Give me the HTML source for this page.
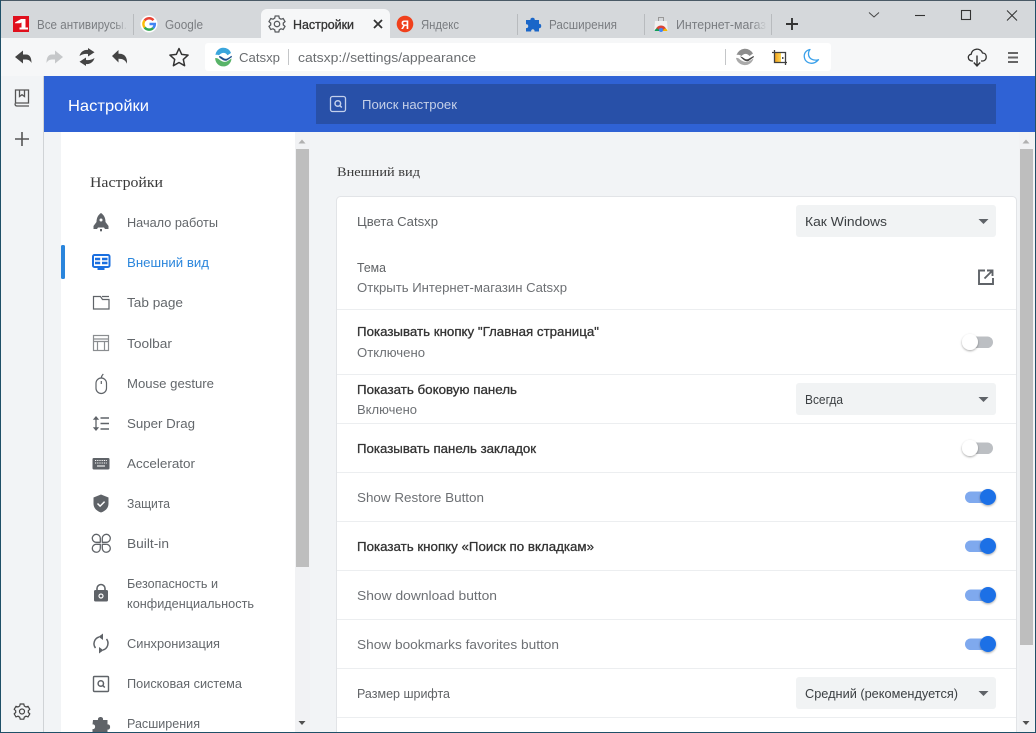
<!DOCTYPE html>
<html><head><meta charset="utf-8"><title>Настройки</title>
<style>
html,body{margin:0;padding:0;background:#f2f4f6;overflow:hidden}
svg{display:block}
text{font-family:"Liberation Sans","DejaVu Sans",sans-serif;font-size:13px;fill:#606366}
.s{font-family:"Liberation Serif","DejaVu Serif",serif;fill:#3a3a3a}
.t{fill:#7a7d81}
.n{fill:#63676b}
.b{fill:#333;stroke:#333;stroke-width:.3px}
.i{fill:#5f6368}
</style></head><body>
<svg width="1036" height="733" viewBox="0 0 1036 733" xmlns="http://www.w3.org/2000/svg">
<defs>
<linearGradient id="fade" x1="0" x2="1" y1="0" y2="0"><stop offset="0" stop-color="#d5d8db" stop-opacity="0"/><stop offset="1" stop-color="#d5d8db"/></linearGradient>
<linearGradient id="crop" x1="0" x2="1" y1="0" y2="0"><stop offset="0" stop-color="#f2a21c"/><stop offset="1" stop-color="#fbd65a"/></linearGradient>
<filter id="sh" x="-40%" y="-40%" width="180%" height="180%"><feDropShadow dx="0" dy="1" stdDeviation="1" flood-color="#000" flood-opacity=".35"/></filter>
</defs>
<rect width="1036" height="733" fill="#f2f4f6"/>
<!-- tab strip -->
<rect width="1036" height="38" fill="#d5d8db"/>
<rect width="1036" height="1" fill="#4a5a66"/>
<path d="M261 38V15a6 6 0 0 1 6-6h117a6 6 0 0 1 6 6v23z" fill="#f6f7f8"/>
<!-- tab 1 -->
<rect x="13" y="16" width="16" height="16" fill="#e0101d"/>
<path d="M15 22.500l6-3.500h4.500v8.500h2.500v2H19.500v-2h2v-5l-1.500 .8h-5z" fill="#fff"/>
<text class="t" x="37" y="29" textLength="90" lengthAdjust="spacingAndGlyphs">Все антивирусы.</text>
<rect x="115" y="14" width="13" height="20" fill="url(#fade)"/>
<rect x="133" y="14" width="1" height="21" fill="#b8bbbe"/>
<!-- google -->
<circle cx="149" cy="24" r="8.500" fill="#fff"/>
<g fill="none" stroke-width="2.500">
<path d="M153.500 20.200A5.800 5.800 0 0 0 144.600 20.500" stroke="#ea4335"/>
<path d="M144.600 20.500A5.800 5.800 0 0 0 144.600 27.500" stroke="#fbbc05"/>
<path d="M144.600 27.500A5.800 5.800 0 0 0 153.200 28" stroke="#34a853"/>
<path d="M153.200 28A5.800 5.800 0 0 0 154.800 24H149.500" stroke="#4285f4"/>
</g>
<text class="t" x="165" y="29" textLength="38" lengthAdjust="spacingAndGlyphs">Google</text>
<!-- gear tab -->
<g transform="translate(277,24)" fill="none" stroke="#5a5d60" stroke-width="1.300">
<path d="M-1.800-8h3.600l.5 2.200 1.700 1 2.200-.7 1.800 3.100-1.700 1.500v1.800l1.700 1.500-1.800 3.100-2.200-.7-1.700 1-.5 2.200h-3.600l-.5-2.200-1.700-1-2.200.7-1.800-3.100 1.700-1.500v-1.800l-1.700-1.500 1.800-3.100 2.200.7 1.700-1z"/>
<circle r="2.700"/>
</g>
<text class="b" x="293" y="29" textLength="61" lengthAdjust="spacingAndGlyphs">Настройки</text>
<path d="M374 20l8 8M382 20l-8 8" stroke="#333" stroke-width="1.800"/>
<!-- yandex -->
<circle cx="405" cy="24" r="8.300" fill="#f0401c"/>
<text x="401" y="29" textLength="8" lengthAdjust="spacingAndGlyphs" style="fill:#fff;font-size:12px;font-weight:bold">Я</text>
<text class="t" x="421" y="29" textLength="38" lengthAdjust="spacingAndGlyphs">Яндекс</text>
<rect x="517" y="14" width="1" height="21" fill="#b8bbbe"/>
<!-- ext -->
<path d="M526 20h4.500c-.8-3 5-3 4.200 0h4.300v4c3-.8 3 5 0 4.200v3.300h-4.500c.5-3-3.800-3-3.300 0h-5.200v-3.500c3 .8 3-4.500 0-3.700z" fill="#1a66c8"/>
<text class="t" x="549" y="29" textLength="68" lengthAdjust="spacingAndGlyphs">Расширения</text>
<rect x="644" y="14" width="1" height="21" fill="#b8bbbe"/>
<!-- store -->
<path d="M655 21h12l.8 10h-13.600z" fill="#f1f1f1"/>
<path d="M658.500 21v-3.500h5V21" fill="none" stroke="#999" stroke-width="1"/>
<path d="M655.500 31a5.500 5.500 0 0 1 11 0z" fill="#db4437"/>
<path d="M654.500 31a3.500 3.500 0 0 1 3.500-2.500l1.500 2.500z" fill="#0f9d58"/>
<path d="M663 31a3 3 0 0 1 2-2.500 3 3 0 0 1 2.500 2.500z" fill="#f4b400"/>
<circle cx="661" cy="30" r="2" fill="#4285f4"/>
<text class="t" x="676" y="29" textLength="90" lengthAdjust="spacingAndGlyphs">Интернет-магаз</text>
<rect x="752" y="14" width="15" height="20" fill="url(#fade)"/>
<rect x="771" y="14" width="1" height="21" fill="#b8bbbe"/>
<path d="M792 18v12M786 24h12" stroke="#333" stroke-width="1.900"/>
<!-- window controls -->
<path d="M869 12.500l5 4.500 5-4.500" fill="none" stroke="#444" stroke-width="1"/>
<path d="M915 15.500h10" stroke="#333" stroke-width="1.100"/>
<rect x="961.500" y="10.500" width="9" height="9" fill="none" stroke="#333" stroke-width="1.100"/>
<path d="M1007 10.500l10 10M1017 10.500l-10 10" stroke="#333" stroke-width="1"/>
<!-- toolbar -->
<rect y="38" width="1036" height="38" fill="#f6f7f8"/>
<rect x="205" y="43" width="626" height="28" rx="3" fill="#fff"/>
<path d="M15 57l8-6.500v4h3c4 0 5.500 3.500 5.500 8.500-1.500-3-3.500-3.500-6.500-3.500h-2v4z" fill="#444"/>
<path d="M63 57l-8-6.500v4h-3c-4 0-5.500 3.500-5.500 8.500 1.500-3 3.500-3.500 6.500-3.500h2v4z" fill="#c6c8ca"/>
<g fill="#444">
<path d="M79.500 56c1-4 4.500-6.500 8.500-6V48l6.500 4.200-6.500 4.300v-2.500c-3-.3-5.500 0-8.500 2z"/>
<path d="M94.500 58c-1 4-4.500 6.500-8.500 6v2l-6.500-4.200 6.500-4.300v2.500c3 .3 5.500 0 8.500-2z"/>
</g>
<path d="M112 56l6.500-6v3.800c6-.5 9 3.500 8.500 10-1.500-3.500-4-5-8.500-5V62.500z" fill="#444"/>
<path d="M179 48.500l2.700 5.900 6.400.7-4.800 4.300 1.300 6.300-5.600-3.200-5.600 3.200 1.300-6.300-4.800-4.300 6.400-.7z" fill="none" stroke="#333" stroke-width="1.500" stroke-linejoin="round"/>
<!-- logo -->
<path d="M215.500 55a8 8 0 0 1 15.500-2l-3.500 2.200c-2.500-3.500-6-2.500-8.500 0-1.200-.5-2.400-.5-3.500-.2z" fill="#3aa5dc"/>
<path d="M219 56c2.500 0 4 2.500 6.500 2.800 2 .2 3.500-1.500 6-3l.5 1.200-5 3.500c-3 1-5-1-7.500-2.700z" fill="#1f4f8c"/>
<path d="M215.200 58c2 0 3 .5 4 1.500 3 2.500 6 3 8.500 1.500l3.800-2.500a8 8 0 0 1-16.300-.5z" fill="#58b368"/>
<text x="239" y="62" textLength="41" lengthAdjust="spacingAndGlyphs" style="fill:#6a6d70">Catsxp</text>
<rect x="288" y="49" width="1" height="16" fill="#c4c6c8"/>
<text x="298" y="62" textLength="178" lengthAdjust="spacingAndGlyphs" style="fill:#6a6d70">catsxp://settings/appearance</text>
<rect x="725" y="49" width="1" height="16" fill="#c4c6c8"/>
<!-- address right icons -->
<path d="M736.500 55a9 9 0 0 1 16.500-1.500l-3.500 2.500c-3-3.500-6-2-8 0-1.500-1-3-1.500-5-1z" fill="#8d8d8d"/>
<path d="M740 56.500c2.500 0 3.500 2 6 2.800 2 .5 4-1.500 7.500-3.300l.5 1-5.500 4c-3 1-5-1-8.500-4.500z" fill="#444"/>
<path d="M736 58c2-.3 3 .5 4 1.500 3 2.500 6.500 3 9.500 1.500l4-2.500a9 9 0 0 1-17.500-.5z" fill="#aaa"/>
<rect x="775" y="53" width="6" height="9" fill="url(#crop)"/>
<rect x="782" y="57" width="1.500" height="2" fill="#555"/>
<path d="M774.500 50v12.500h12.500M772 52.500h13.500V65" fill="none" stroke="#3f3f3f" stroke-width="1.300"/>
<path d="M810 49.500c-4.500 1-6.500 4.500-5.500 8.500 1 4.500 6.500 6.500 10.500 4.500 1.500-.8 2.500-1.600 3.500-2.800-5.500 1.500-9.500-1-10-5.200-.2-2 .3-3.500 1.500-5z" fill="none" stroke="#3aa0ea" stroke-width="1.300" stroke-linejoin="round"/>
<!-- cloud download -->
<path d="M973 61h-1c-4.500-.5-5-6-.8-6.800 1-6.500 9.800-6.500 11.300-1.200 4.800-.2 5 7.500.5 8H981" fill="none" stroke="#333" stroke-width="1.300"/>
<path d="M977 55.500v10M973.800 62.500l3.200 3.500 3.200-3.500" fill="none" stroke="#333" stroke-width="1.400"/>
<path d="M1008 52h10v2h-10zM1008 56.500h10v2h-10zM1008 61h10v2h-10z" fill="#666"/>
<!-- left rail -->
<rect y="76" width="43" height="657" fill="#f2f4f6"/>
<rect x="43" y="76" width="1" height="657" fill="#d0d3d6"/>
<path d="M15.500 90h13v13h-13zM15 103.500c0 2 1 2.500 2 2.500h12" fill="none" stroke="#555" stroke-width="1.300"/>
<path d="M19.500 90v6.500l2.500-1.800 2.500 1.800V90" fill="none" stroke="#555" stroke-width="1.300"/>
<path d="M22 132v14M15 139h14" stroke="#555" stroke-width="1.600"/>
<g transform="translate(22,711.500)" fill="none" stroke="#444" stroke-width="1.200">
<path d="M-1.800-7.500h3.600l.5 2 1.700 1 2-.7 1.800 3-1.500 1.400v1.800l1.500 1.400-1.800 3-2-.7-1.700 1-.5 2h-3.600l-.5-2-1.700-1-2 .7-1.800-3 1.500-1.400v-1.800l-1.500-1.400 1.800-3 2 .7 1.700-1z"/>
<circle r="2.500"/>
</g>
<!-- header -->
<rect x="44" y="76" width="992" height="56" fill="#2f62d5"/>
<rect x="316" y="84" width="680" height="40" fill="#2850a8"/>
<text x="68" y="111" textLength="81" lengthAdjust="spacingAndGlyphs" style="fill:#fff;font-size:16px">Настройки</text>
<rect x="330.500" y="96.500" width="15" height="15" rx="2" fill="none" stroke="#c3d0ec" stroke-width="1.300"/>
<circle cx="337.800" cy="103.500" r="2.800" fill="none" stroke="#c3d0ec" stroke-width="1.500"/>
<path d="M340 105.700l1.800 1.800" stroke="#c3d0ec" stroke-width="1.500"/>
<text x="362" y="109" textLength="95" lengthAdjust="spacingAndGlyphs" style="fill:#c5d0e8">Поиск настроек</text>
<!-- nav -->
<rect x="61" y="132" width="234" height="601" fill="#fff"/>
<rect x="61" y="245" width="4" height="34" rx="1.500" fill="#2a85dc"/>
<text class="s" x="90" y="187" textLength="73" lengthAdjust="spacingAndGlyphs" style="font-size:15px">Настройки</text>
<text class="n" x="127" y="227" textLength="91" lengthAdjust="spacingAndGlyphs">Начало работы</text>
<text x="127" y="267" textLength="82" lengthAdjust="spacingAndGlyphs" style="fill:#2b86dc">Внешний вид</text>
<text class="n" x="127" y="307" textLength="56" lengthAdjust="spacingAndGlyphs">Tab page</text>
<text class="n" x="127" y="348" textLength="45" lengthAdjust="spacingAndGlyphs">Toolbar</text>
<text class="n" x="127" y="388" textLength="87" lengthAdjust="spacingAndGlyphs">Mouse gesture</text>
<text class="n" x="127" y="428" textLength="68" lengthAdjust="spacingAndGlyphs">Super Drag</text>
<text class="n" x="127" y="468" textLength="68" lengthAdjust="spacingAndGlyphs">Accelerator</text>
<text class="n" x="127" y="508" textLength="43" lengthAdjust="spacingAndGlyphs">Защита</text>
<text class="n" x="127" y="548" textLength="42" lengthAdjust="spacingAndGlyphs">Built-in</text>
<text class="n" x="127" y="588" textLength="91" lengthAdjust="spacingAndGlyphs">Безопасность и</text>
<text class="n" x="127" y="608" textLength="127" lengthAdjust="spacingAndGlyphs">конфиденциальность</text>
<text class="n" x="127" y="648" textLength="93" lengthAdjust="spacingAndGlyphs">Синхронизация</text>
<text class="n" x="127" y="688" textLength="115" lengthAdjust="spacingAndGlyphs">Поисковая система</text>
<text class="n" x="127" y="728" textLength="73" lengthAdjust="spacingAndGlyphs">Расширения</text>
<!-- nav icons -->
<path d="M101 213c3 2 4.500 5 4.500 9l3 4v3h-3.500l-1-1.500h-6l-1 1.500H93.500v-3l3-4c0-4 1.500-7 4.500-9z" class="i"/>
<circle cx="101" cy="220" r="1.500" fill="#fff"/>
<rect x="100" y="229" width="2" height="2.300" class="i"/>
<rect x="93" y="255" width="16.500" height="12" rx="1.500" fill="none" stroke="#1a6fe0" stroke-width="2"/>
<path d="M95 257.800h5.200v2.500H95zM102 257.800h5.500v2.500H102zM95 261.800h5.200v2.500H95zM102 261.800h5.500v2.500H102zM97.500 268h7v2h-7z" fill="#1a6fe0"/>
<path d="M93.500 296.500h7l2 3h6.500v9.500h-15.500zM102 296.500h7" fill="none" stroke="#5f6368" stroke-width="1.200"/>
<rect x="93.500" y="335.500" width="15" height="15" fill="none" stroke="#8a8d90" stroke-width="1.200"/>
<path d="M93.500 339h15M93.500 341.500h15M97.500 341.500v9M104.500 341.500v9" stroke="#8a8d90" stroke-width="1.200"/>
<rect x="96" y="378" width="10.500" height="15.500" rx="5.200" fill="none" stroke="#5f6368" stroke-width="1.200"/>
<path d="M101.300 378c0-2 1-3 2-4M101.300 381v3" fill="none" stroke="#5f6368" stroke-width="1.200"/>
<path d="M96 417v13" stroke="#5f6368" stroke-width="1.300"/>
<path d="M93.500 419.500l2.500-3 2.500 3zM93.500 427.500l2.500 3 2.500-3z" stroke="#5f6368" fill="#5f6368" stroke-width=".6"/>
<path d="M100.500 418h8.500M100.500 423.500h8.500M100.500 429h8.500" stroke="#5f6368" stroke-width="1.500"/>
<rect x="92.500" y="458" width="17" height="11.500" rx="1.200" class="i"/>
<path d="M95 460.500h12M95 463h12" stroke="#fff" stroke-width="1.100" stroke-dasharray="1 .8"/>
<path d="M97 466h8" stroke="#fff" stroke-width="1.100"/>
<path d="M101 494.500l7.500 3v6c0 4.500-3 7.500-7.500 9-4.500-1.500-7.500-4.500-7.500-9v-6z" class="i"/>
<path d="M97.500 503.500l2.600 2.600 4.500-4.500" fill="none" stroke="#fff" stroke-width="1.500"/>
<g fill="none" stroke="#5f6368" stroke-width="1.300" stroke-linejoin="round">
<path d="M100.300 542.300H96.700a4 4 0 1 1 3.600-4z"/>
<path d="M102.300 542.300h3.600a4 4 0 1 0-3.600-4z"/>
<path d="M100.300 544.300H96.700a4 4 0 1 0 3.600 4z"/>
<path d="M102.300 544.300h3.600a4 4 0 1 1-3.600 4z"/>
</g>
<rect x="94" y="590" width="14" height="11.500" rx="1.500" class="i"/>
<path d="M97 590v-1.500a4 4 0 0 1 8 0V590" fill="none" stroke="#5f6368" stroke-width="1.600"/>
<circle cx="101" cy="596" r="2" fill="none" stroke="#fff" stroke-width="1.200"/>
<path d="M95.500 648a7 7 0 0 1 3.500-11M106.500 639a7 7 0 0 1-3.500 11" fill="none" stroke="#5f6368" stroke-width="1.500"/>
<path d="M98.500 636.800l4.500-3.300v6.500zM103.500 650.200l-4.500 3.300v-6.500z" class="i"/>
<rect x="93.500" y="676.500" width="15" height="15" rx="1" fill="none" stroke="#5f6368" stroke-width="1.400"/>
<circle cx="100.800" cy="683.500" r="2.700" fill="none" stroke="#5f6368" stroke-width="1.500"/>
<path d="M103 685.700l1.800 1.800" stroke="#5f6368" stroke-width="1.500"/>
<path d="M93 720h5c-.8-4 6-4 5 0h4.500v4.500c3.500-.8 3.500 6 0 5v3.500h-15v-4c3.500 1 3.500-5.500 0-4.500z" class="i"/>
<!-- nav scrollbar -->
<rect x="295" y="132" width="15" height="601" fill="#f1f2f4"/>
<rect x="296" y="149" width="13" height="418" fill="#bebebe"/>
<path d="M298.500 143.500l3.500-4 3.500 4z" fill="#b0b0b0"/>
<path d="M298.500 721l3.500 4 3.500-4z" fill="#505050"/>
<!-- main scrollbar -->
<rect x="1019" y="132" width="15" height="601" fill="#f1f2f4"/>
<rect x="1020" y="149" width="13" height="496" fill="#bebebe"/>
<path d="M1022.500 143.500l3.500-4 3.500 4z" fill="#b0b0b0"/>
<path d="M1022.500 721l3.500 4 3.500-4z" fill="#505050"/>
<!-- main -->
<text class="s" x="337" y="176" textLength="83" lengthAdjust="spacingAndGlyphs">Внешний вид</text>
<rect x="336.500" y="196.500" width="680" height="545" rx="4" fill="#fff" stroke="#e2e4e7" stroke-width="1"/>
<g fill="#eceef0">
<rect x="337" y="309" width="679" height="1"/><rect x="337" y="374" width="679" height="1"/><rect x="337" y="423" width="679" height="1"/><rect x="337" y="472" width="679" height="1"/><rect x="337" y="521" width="679" height="1"/><rect x="337" y="570" width="679" height="1"/><rect x="337" y="619" width="679" height="1"/><rect x="337" y="668" width="679" height="1"/><rect x="337" y="717" width="679" height="1"/>
</g>
<text x="357" y="226" textLength="81" lengthAdjust="spacingAndGlyphs">Цвета Catsxp</text>
<text x="357" y="272" textLength="29" lengthAdjust="spacingAndGlyphs">Тема</text>
<text x="357" y="292" textLength="210" lengthAdjust="spacingAndGlyphs" style="fill:#6d7074">Открыть Интернет-магазин Catsxp</text>
<text class="b" x="357" y="336" textLength="242" lengthAdjust="spacingAndGlyphs">Показывать кнопку "Главная страница"</text>
<text x="357" y="357" textLength="68" lengthAdjust="spacingAndGlyphs" style="fill:#6d7074">Отключено</text>
<text class="b" x="357" y="394" textLength="160" lengthAdjust="spacingAndGlyphs">Показать боковую панель</text>
<text x="357" y="414" textLength="60" lengthAdjust="spacingAndGlyphs" style="fill:#6d7074">Включено</text>
<text class="b" x="357" y="453" textLength="179" lengthAdjust="spacingAndGlyphs">Показывать панель закладок</text>
<text x="357" y="502" textLength="127" lengthAdjust="spacingAndGlyphs" style="fill:#6d7074">Show Restore Button</text>
<text class="b" x="357" y="551" textLength="237" lengthAdjust="spacingAndGlyphs">Показать кнопку «Поиск по вкладкам»</text>
<text x="357" y="600" textLength="140" lengthAdjust="spacingAndGlyphs" style="fill:#6d7074">Show download button</text>
<text x="357" y="649" textLength="202" lengthAdjust="spacingAndGlyphs" style="fill:#6d7074">Show bookmarks favorites button</text>
<text x="357" y="698" textLength="93" lengthAdjust="spacingAndGlyphs">Размер шрифта</text>
<!-- selects -->
<g fill="#f1f3f4">
<rect x="796" y="205" width="200" height="32" rx="3"/><rect x="796" y="383" width="200" height="32" rx="3"/><rect x="796" y="677" width="200" height="32" rx="3"/>
</g>
<text x="805" y="226" textLength="82" lengthAdjust="spacingAndGlyphs" style="fill:#3c4043">Как Windows</text>
<text x="805" y="404" textLength="38" lengthAdjust="spacingAndGlyphs" style="fill:#3c4043">Всегда</text>
<text x="805" y="698" textLength="153" lengthAdjust="spacingAndGlyphs" style="fill:#3c4043">Средний (рекомендуется)</text>
<g fill="#5f6368"><path d="M978.500 219h10l-5 5zM978.500 397h10l-5 5zM978.500 691h10l-5 5z"/></g>
<!-- external link -->
<path d="M985 270.500h-6v13.500h14V278" fill="none" stroke="#5f6368" stroke-width="1.900"/>
<path d="M984.500 278.500l7.500-7.500M987 270.500h5.500V276" fill="none" stroke="#5f6368" stroke-width="1.900"/>
<!-- toggles off -->
<rect x="965" y="336.500" width="28" height="11.500" rx="5.700" fill="#bcbfc3"/>
<circle cx="970" cy="342" r="8" fill="#fff" filter="url(#sh)"/>
<rect x="965" y="442.500" width="28" height="11.500" rx="5.700" fill="#bcbfc3"/>
<circle cx="970" cy="448" r="8" fill="#fff" filter="url(#sh)"/>
<!-- toggles on -->
<rect x="965" y="491.500" width="26" height="11.500" rx="5.700" fill="#7fa9ee"/><circle cx="988" cy="497" r="8" fill="#1a6fe6" filter="url(#sh)"/>
<rect x="965" y="540.500" width="26" height="11.500" rx="5.700" fill="#7fa9ee"/><circle cx="988" cy="546" r="8" fill="#1a6fe6" filter="url(#sh)"/>
<rect x="965" y="589.500" width="26" height="11.500" rx="5.700" fill="#7fa9ee"/><circle cx="988" cy="595" r="8" fill="#1a6fe6" filter="url(#sh)"/>
<rect x="965" y="638.500" width="26" height="11.500" rx="5.700" fill="#7fa9ee"/><circle cx="988" cy="644" r="8" fill="#1a6fe6" filter="url(#sh)"/>
<!-- window border -->
<rect x="0" y="0" width="1" height="733" fill="#1f5068"/>
<rect x="1035" y="0" width="1" height="733" fill="#1f5068"/>
<rect x="0" y="732" width="1036" height="1" fill="#1f5068"/>
</svg>
</body></html>
